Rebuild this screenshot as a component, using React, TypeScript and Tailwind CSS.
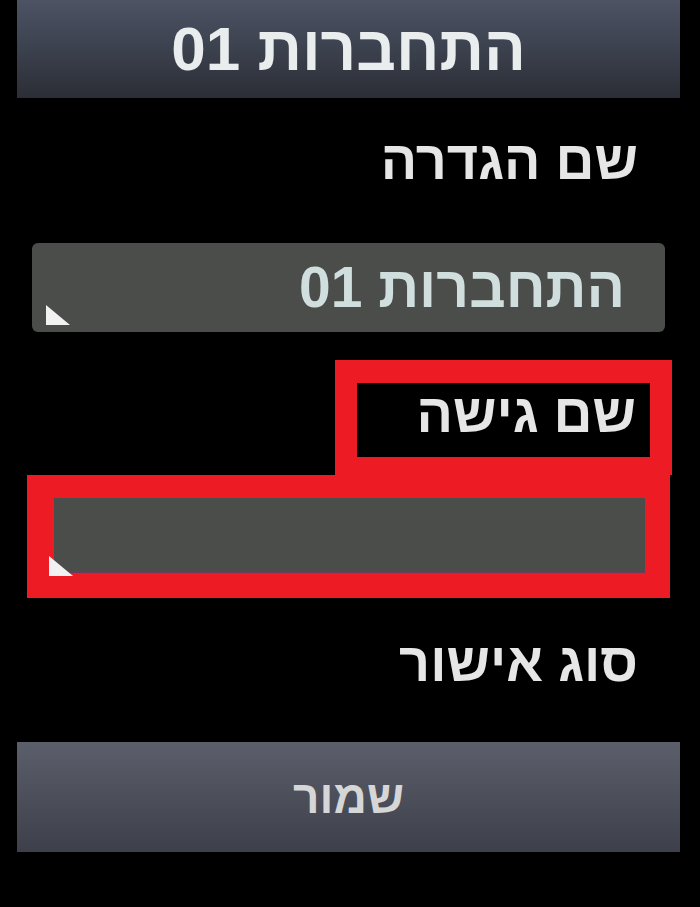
const Corner = ({ className }: { className: string }) => (
    <svg className={className} width="26" height="22" viewBox="0 0 26 22">
        <polygon points="1,1 25,21 1,21" fill="#f2f2f2" />
    </svg>
)

export default function App() {
    return (
        <div dir="rtl" className="w-[700px] h-[907px] bg-black overflow-hidden font-['Liberation_Sans',Arial,sans-serif]">
            <div className="ml-[17px] mr-[20px] h-[98px] bg-gradient-to-b from-[#4d5364] via-[#3c414e] to-[#2b2e36] flex items-center justify-center">
                <span className="text-[62px] font-bold text-[#e9eded] leading-none">התחברות 01</span>
            </div>

            <div className="mt-[32px] h-[60px] pr-[62px] flex items-center text-[54px] leading-none font-bold text-[#e6e6e6]">שם הגדרה</div>

            <div className="mt-[53px] mr-[35px] w-[633px] h-[89px] rounded-[6px] bg-[#4b4d4b] relative flex items-center pr-[40px]">
                <span className="text-[57px] font-bold text-[#d0dedd] leading-none">התחברות 01</span>
                <Corner className="absolute left-[13px] bottom-[6px]" />
            </div>

            <div className="mt-[28px] mr-[28px] w-[337px] bg-[#ed1c24] pt-[23px] pb-[18px] px-[22px]">
                <div className="h-[74px] bg-black flex items-center pr-[14px] pb-[14px] text-[54px] leading-none font-bold text-[#e6e6e6]">שם גישה</div>
            </div>
            <div className="mr-[30px] w-[643px] bg-[#ed1c24] pt-[23px] pb-[25px] pr-[25px] pl-[27px] relative">
                <div className="h-[75px] bg-[#4a4d4a] border-b-2 border-[#6e3a5c]" />
                <Corner className="absolute left-[21px] bottom-[21px]" />
            </div>

            <div className="mt-[34px] h-[60px] pr-[62px] flex items-center text-[54px] leading-none font-bold text-[#e6e6e6]">סוג אישור</div>

            <div className="mt-[50px] ml-[17px] mr-[20px] h-[110px] bg-gradient-to-b from-[#5b5f6b] to-[#3d404a] flex items-center justify-center">
                <span className="text-[46px] font-bold text-[#d6d6d6] leading-none">שמור</span>
            </div>
        </div>
    )
}
